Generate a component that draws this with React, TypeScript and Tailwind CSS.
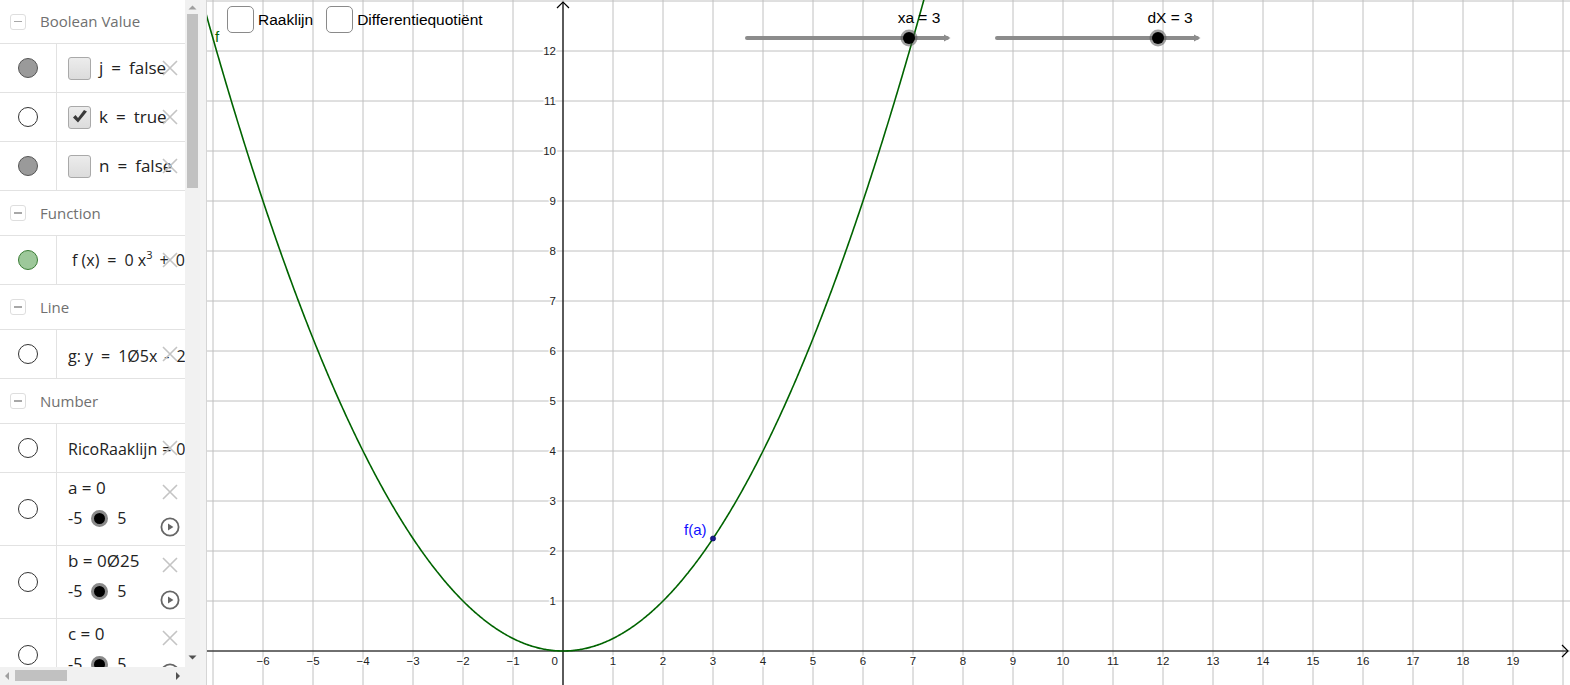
import React from "react";

const OX = 356;
const OY = 651;
const U = 50;
const W = 1363;
const H = 685;
const px = (x: number) => OX + U * x;
const py = (y: number) => OY - U * y;

function curvePath() {
  const pts: string[] = [];
  for (let x = -7.4; x <= 7.4; x += 0.02) {
    pts.push(`${px(x).toFixed(2)},${py(0.25 * x * x).toFixed(2)}`);
  }
  return "M" + pts.join(" L");
}

function DelIcon() {
  return (
    <svg width="16" height="16" viewBox="0 0 16 16" className="block">
      <path d="M1 1 L15 15 M15 1 L1 15" stroke="#c4c4c4" strokeWidth="1.6" fill="none" />
    </svg>
  );
}

function PlayIcon() {
  return (
    <svg width="20" height="20" viewBox="0 0 20 20" className="block">
      <circle cx="10" cy="10" r="8.6" stroke="#666" strokeWidth="1.8" fill="white" />
      <path d="M8 6.4 L13.4 10 L8 13.6 Z" fill="#666" />
    </svg>
  );
}

function Dot({ kind }: { kind: "gray" | "white" | "green" }) {
  const cls =
    kind === "gray"
      ? "bg-[#9a9a9a] border-[#555]"
      : kind === "green"
      ? "bg-[#9dc89a] border-[#3b7d36]"
      : "bg-white border-[#333]";
  return <div className={`w-[20px] h-[20px] rounded-full border ${cls}`} />;
}

function Header({ label, first }: { label: string; first?: boolean }) {
  return (
    <div className={`flex items-center border-b border-[#e2e2e2] ${first ? "h-[44px]" : "h-[45px]"}`}>
      <div className="ml-[10px] w-[16px] h-[16px] rounded-[3px] border border-[#dedede] flex items-center justify-center">
        <div className="w-[8px] h-[1.5px] bg-[#a8a8a8]" />
      </div>
      <span className="ml-[14px] text-[15px] text-[#707070]">{label}</span>
    </div>
  );
}

function Row({
  dot,
  tall,
  children,
  play,
}: {
  dot: "gray" | "white" | "green";
  tall?: boolean;
  children: React.ReactNode;
  play?: boolean;
}) {
  return (
    <div className={`flex border-b border-[#e2e2e2] ${tall ? "h-[73px]" : "h-[49px]"}`}>
      <div className="w-[57px] shrink-0 border-r border-[#e2e2e2] flex items-center justify-center">
        <Dot kind={dot} />
      </div>
      <div className="relative flex-1 overflow-hidden whitespace-nowrap">
        {children}
        <div className={`absolute left-[105px] ${tall ? "top-[11px]" : "top-[16px]"}`}>
          <DelIcon />
        </div>
        {play && (
          <div className="absolute left-[103px] top-[44px]">
            <PlayIcon />
          </div>
        )}
      </div>
    </div>
  );
}

function BoolRow({ dot, name, value, checked }: { dot: "gray" | "white"; name: string; value: string; checked?: boolean }) {
  return (
    <Row dot={dot}>
      <div className="flex items-center h-full pl-[11px]">
        <div className="w-[23px] h-[23px] rounded-[3px] border border-[#a9a9a9] bg-gradient-to-b from-[#ececec] to-[#dcdcdc] flex items-center justify-center">
          {checked && (
            <svg width="18" height="18" viewBox="0 0 18 18">
              <path d="M2 9.5 L7 14.5 L16 3.5 L13 2 L7 10 L4.5 7 Z" fill="#3a3a3a" />
            </svg>
          )}
        </div>
        <span className="ml-[8px] text-[17px] text-[#222]">
          {name}
          <span className="mx-[8px]">=</span>
          {value}
        </span>
      </div>
    </Row>
  );
}

function SliderRow({ name, value }: { name: string; value: string }) {
  return (
    <Row dot="white" tall play>
      <div className="pl-[11px] pt-[3px] text-[17px] text-[#222] leading-[24px]">
        {name} = {value}
      </div>
      <div className="flex items-center pl-[11px] mt-[8px] text-[16px] text-[#222] leading-[20px]">
        <span>-5</span>
        <div className="ml-[9px] w-[17px] h-[17px] rounded-full bg-black border-[3px] border-[#8a8a8a]" />
        <span className="ml-[9px]">5</span>
      </div>
    </Row>
  );
}

function Panel() {
  return (
    <div className="flex w-[200px] h-full shrink-0 bg-white" style={{ fontFamily: '"Open Sans", "Noto Sans", sans-serif' }}>
      <div className="flex flex-col w-[185px] h-full">
        <div className="flex-1 overflow-hidden">
          <Header label="Boolean Value" first />
          <BoolRow dot="gray" name="j" value="false" />
          <BoolRow dot="white" name="k" value="true" checked />
          <BoolRow dot="gray" name="n" value="false" />
          <Header label="Function" />
          <Row dot="green">
            <div className="flex items-center h-full pl-[15px] text-[16px] text-[#222]">
              f (x)<span className="mx-[8px]">=</span>0 x<sup className="text-[11px]">3</sup>
              <span className="mx-[7px]">+</span>0
            </div>
          </Row>
          <Header label="Line" />
          <Row dot="white">
            <div className="flex items-center h-full pl-[11px] pt-[4px] text-[16px] text-[#222]">
              g: y<span className="mx-[8px]">=</span>1Ø5x<span className="mx-[7px]">-</span>2
            </div>
          </Row>
          <Header label="Number" />
          <Row dot="white">
            <div className="flex items-center h-full pl-[11px] pt-[1px] text-[16px] text-[#222]">
              RicoRaaklijn<span className="mx-[5px]">=</span>0
            </div>
          </Row>
          <SliderRow name="a" value="0" />
          <SliderRow name="b" value="0Ø25" />
          <SliderRow name="c" value="0" />
        </div>
        <div className="relative h-[18px] bg-[#f1f1f1] shrink-0">
          <svg width="185" height="18" className="absolute inset-0">
            <path d="M9 5 L5 9 L9 13 Z" fill="#a0a0a0" />
            <path d="M176 5 L180 9 L176 13 Z" fill="#505050" />
          </svg>
          <div className="absolute left-[15px] top-[3px] w-[52px] h-[11px] bg-[#c1c1c1]" />
        </div>
      </div>
      <div className="flex flex-col w-[15px] h-full bg-[#f1f1f1]">
        <svg width="15" height="14" className="shrink-0">
          <path d="M3.5 9.5 L7.5 5.5 L11.5 9.5 Z" fill="#a0a0a0" />
        </svg>
        <div className="ml-[2px] w-[11px] h-[174px] bg-[#c1c1c1]" />
        <div className="flex-1" />
        <svg width="15" height="16" className="shrink-0">
          <path d="M3.5 4.5 L7.5 8.5 L11.5 4.5 Z" fill="#505050" />
        </svg>
        <div className="h-[18px] shrink-0 bg-[#f1f1f1]" />
      </div>
    </div>
  );
}

function Graph() {
  const vx: number[] = [];
  for (let k = -7; k <= 20; k++) vx.push(k);
  const hy: number[] = [];
  for (let k = 0; k <= 13; k++) hy.push(k);
  const xlabels = vx.filter((k) => k >= -6 && k <= 19 && k !== 0);
  const ylabels = hy.filter((k) => k >= 1 && k <= 12);

  return (
    <div className="relative flex-1 h-full bg-white" style={{ fontFamily: '"Liberation Sans", Arial, sans-serif' }}>
      <svg width={W} height={H} viewBox={`0 0 ${W} ${H}`} className="block" fontFamily='"Liberation Sans", Arial, sans-serif'>
        {vx.map((k) => (
          <line key={"v" + k} x1={px(k)} y1={0} x2={px(k)} y2={H} stroke="#c0c0c0" strokeWidth="1" />
        ))}
        {hy.map((k) => (
          <line key={"h" + k} x1={0} y1={py(k)} x2={W} y2={py(k)} stroke="#c0c0c0" strokeWidth="1" />
        ))}
        <line x1={0} y1={OY} x2={W - 2} y2={OY} stroke="#000" strokeWidth="1.2" />
        <path d={`M${W - 8} ${OY - 6} L${W - 2} ${OY} L${W - 8} ${OY + 6}`} stroke="#000" strokeWidth="1.2" fill="none" />
        <line x1={OX} y1={2} x2={OX} y2={H} stroke="#000" strokeWidth="1.2" />
        <path d={`M${OX - 6} 8 L${OX} 2 L${OX + 6} 8`} stroke="#000" strokeWidth="1.2" fill="none" />

        {xlabels.map((k) => (
          <text
            key={"xl" + k}
            x={px(k)}
            y={665}
            fontSize="11.5"
            textAnchor="middle"
            fill="#222"
            stroke="white"
            strokeWidth="3"
            paintOrder="stroke"
          >
            {k < 0 ? `\u2212${-k}` : k}
          </text>
        ))}
        <text x={OX - 5} y={665} fontSize="11.5" textAnchor="end" fill="#222" stroke="white" strokeWidth="3" paintOrder="stroke">
          0
        </text>
        {ylabels.map((k) => (
          <text
            key={"yl" + k}
            x={OX - 7}
            y={py(k) + 4}
            fontSize="11.5"
            textAnchor="end"
            fill="#222"
            stroke="white"
            strokeWidth="3"
            paintOrder="stroke"
          >
            {k}
          </text>
        ))}

        <path d={curvePath()} stroke="#006400" strokeWidth="1.6" fill="none" />
        <text x={8} y={42} fontSize="15" fill="#006400">
          f
        </text>

        <text x={477} y={535} fontSize="15" fill="#1010ff">
          f(a)
        </text>
        <circle cx={px(3)} cy={py(2.25)} r="2.6" fill="#1a1a8a" stroke="#000060" strokeWidth="0.6" />

        {/* sliders */}
        <line x1={540} y1={38} x2={740} y2={38} stroke="#8c8c8c" strokeWidth="4" strokeLinecap="round" />
        <path d="M737 34.5 L743.5 38 L737 41.5 Z" fill="#8c8c8c" />
        <circle cx={702} cy={38} r="8.5" fill="#555" opacity="0.55" />
        <circle cx={702} cy={38} r="6" fill="#000" />
        <text x={712} y={23} fontSize="15.5" textAnchor="middle" fill="#000">
          xa = 3
        </text>

        <line x1={790} y1={38} x2={990} y2={38} stroke="#8c8c8c" strokeWidth="4" strokeLinecap="round" />
        <path d="M987 34.5 L993.5 38 L987 41.5 Z" fill="#8c8c8c" />
        <circle cx={951} cy={38} r="8.5" fill="#555" opacity="0.55" />
        <circle cx={951} cy={38} r="6" fill="#000" />
        <text x={963} y={23} fontSize="15.5" textAnchor="middle" fill="#000">
          dX = 3
        </text>
      </svg>

      <div className="absolute left-[20px] top-[6px] flex items-center text-[15.5px] text-black">
        <div className="w-[27px] h-[27px] rounded-[5px] border-[1.5px] border-[#8a8a8a] bg-white" />
        <span className="ml-[4px]">Raaklijn</span>
        <div className="ml-[13px] w-[27px] h-[27px] rounded-[5px] border-[1.5px] border-[#8a8a8a] bg-white" />
        <span className="ml-[4px]">Differentiequotiënt</span>
      </div>
    </div>
  );
}

export default function App() {
  return (
    <div className="flex w-[1570px] h-[685px] overflow-hidden bg-white">
      <Panel />
      <div className="w-[7px] h-full shrink-0 bg-[#f3f3f3] border-r border-[#d6d6d6]" />
      <Graph />
    </div>
  );
}
